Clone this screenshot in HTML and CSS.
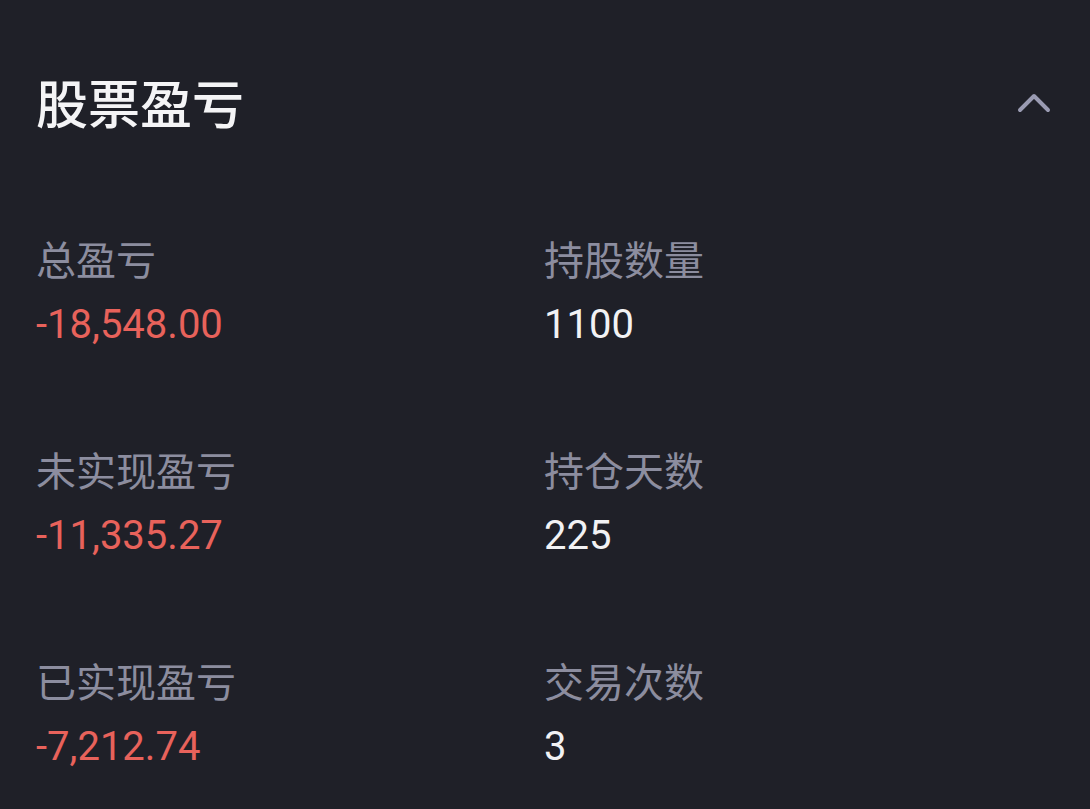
FILE: index.html
```html
<!DOCTYPE HTML><html><head>
  <meta charset="utf-8">
  <title>股票盈亏</title>
  <meta name="viewport" content="width=device-width, initial-scale=1">
  <link rel="stylesheet" href="styles.css"></head><body>
  <div class="panel">
    <div class="head">
      <h3>股票盈亏</h3>
      <svg class="fold" width="36" height="24" viewBox="0 0 36 24">
        <path d="M4 20 L18 6 L32 20" fill="none" stroke="#9a9bb2" stroke-width="4" stroke-linecap="round" stroke-linejoin="round"/>
      </svg>
    </div>
    <div class="stats">
      <div class="item">
        <div class="label">总盈亏</div>
        <div class="value red">-18,548.00</div>
      </div>
      <div class="item">
        <div class="label">持股数量</div>
        <div class="value">1100</div>
      </div>
      <div class="item">
        <div class="label">未实现盈亏</div>
        <div class="value red">-11,335.27</div>
      </div>
      <div class="item">
        <div class="label">持仓天数</div>
        <div class="value">225</div>
      </div>
      <div class="item">
        <div class="label">已实现盈亏</div>
        <div class="value red">-7,212.74</div>
      </div>
      <div class="item">
        <div class="label">交易次数</div>
        <div class="value">3</div>
      </div>
    </div>
  </div>
</body></html>
```

FILE: styles.css
```css
  * {font-family: "Noto Sans CJK SC", "Noto Sans", sans-serif}
  html, body {
    margin: 0;
    padding: 0;
    background-color: #1f2028;
  }
  .panel {
    padding: 65px 36px 0 36px;
    height: 744px;
    overflow: hidden;
  }
  .head {
    display: flex;
    align-items: center;
    justify-content: space-between;
    height: 74px;
  }
  h3 {
    margin: 0;
    font-size: 52px;
    font-weight: 500;
    line-height: 74px;
    color: #f4f4f6;
  }
  .fold {
    margin-right: 2px;
    margin-top: -1px;
  }
  .stats {
    display: grid;
    grid-template-columns: 508px 1fr;
    row-gap: 88px;
    margin-top: 91px;
  }
  .label {
    font-size: 40px;
    line-height: 56px;
    color: #8c8d9f;
    margin-bottom: 11px;
  }
  .value {
    font-family: Roboto, "Noto Sans", sans-serif;
    font-size: 40px;
    line-height: 56px;
    color: #f2f2f4;
  }
  .value.red {
    color: #e8625b;
  }
```
